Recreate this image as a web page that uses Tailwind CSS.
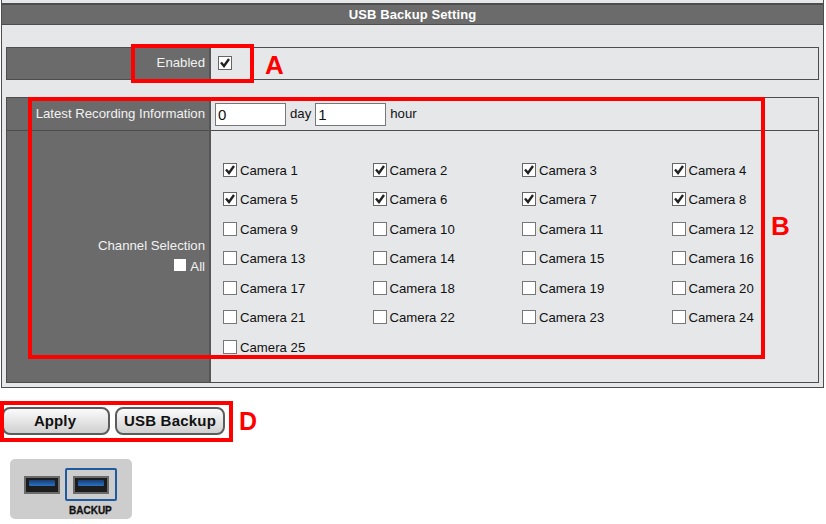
<!DOCTYPE html>
<html><head><script src="https://cdn.jsdelivr.net/npm/@tailwindcss/browser@4"></script></head>
<body class="bg-white font-['Liberation_Sans',Arial,sans-serif] text-[13.2px] text-[#111]">
<div class="relative w-[826px] h-[524px] overflow-hidden">
  <!-- Panel -->
  <div class="ml-[1px] w-[823px] h-[388px] border-x border-b border-[#4d4d4d] bg-[#e6e7e9] pt-[3px]">
    <div class="h-[22px] border-t-2 border-b border-t-[#4d4d4d] border-b-[#4d4d4d] bg-[#6b6b6b] text-center text-white font-bold text-[13px] leading-[19px] tracking-[0.1px]">USB Backup Setting</div>
    <div class="px-[4px] pt-[22px]">
      <div class="flex h-[33px] w-[813px] border border-[#4d4d4d]">
        <div class="w-[204px] shrink-0 flex items-center justify-end pr-[4px] pb-[2px] bg-[#6b6b6b] border-r-2 border-[#555] text-[#f2f2f2]">Enabled</div>
        <div class="flex items-center pl-[7px] pb-[2px]">
          <span class="flex items-center justify-center w-[14px] h-[14px] bg-white border border-[#666]"><svg viewBox="0 0 12 12" class="w-[12px] h-[12px]"><path d="M2 5.5L5 9L10 2" fill="none" stroke="#222" stroke-width="2.4"/></svg></span>
        </div>
      </div>
      <div class="mt-[17px] w-[813px] h-[286px] border border-[#4d4d4d] flex">
        <div class="w-[204px] shrink-0 bg-[#6b6b6b] border-r-2 border-[#555] flex flex-col text-[#f2f2f2]">
          <div class="h-[33px] flex items-center justify-end pr-[4px] border-b border-[#4d4d4d] pb-[1px]">Latest Recording Information</div>
          <div class="flex-1 flex flex-col items-end justify-center pr-[4px] pb-[2px] leading-[21px]">
            <div>Channel Selection</div>
            <div class="flex items-center gap-[4px]"><span class="w-[12px] h-[12px] bg-white -mt-[2px]"></span>All</div>
          </div>
        </div>
        <div class="flex-1 min-w-0 flex flex-col">
          <div class="h-[33px] flex items-center pl-[4px] gap-[4px] border-b border-[#4d4d4d]">
            <span class="w-[71px] h-[23px] bg-white border border-[#777] pl-[2px] text-[15px] leading-[21px]">0</span><span>day</span>
            <span class="w-[71px] h-[23px] bg-white border border-[#777] pl-[2px] text-[15px] leading-[21px]">1</span><span>hour</span>
          </div>
          <div class="grid grid-cols-[149.5px_149.5px_149.5px_1fr] auto-rows-[29.5px] pl-[12px] pt-[25px]">
            <label class="flex items-center gap-[3px]"><span class="flex items-center justify-center w-[14px] h-[14px] bg-white border border-[#666] -mt-[2px]"><svg viewBox="0 0 12 12" class="w-[12px] h-[12px]"><path d="M2 5.5L5 9L10 2" fill="none" stroke="#222" stroke-width="2.4"/></svg></span>Camera 1</label>
            <label class="flex items-center gap-[3px]"><span class="flex items-center justify-center w-[14px] h-[14px] bg-white border border-[#666] -mt-[2px]"><svg viewBox="0 0 12 12" class="w-[12px] h-[12px]"><path d="M2 5.5L5 9L10 2" fill="none" stroke="#222" stroke-width="2.4"/></svg></span>Camera 2</label>
            <label class="flex items-center gap-[3px]"><span class="flex items-center justify-center w-[14px] h-[14px] bg-white border border-[#666] -mt-[2px]"><svg viewBox="0 0 12 12" class="w-[12px] h-[12px]"><path d="M2 5.5L5 9L10 2" fill="none" stroke="#222" stroke-width="2.4"/></svg></span>Camera 3</label>
            <label class="flex items-center gap-[3px]"><span class="flex items-center justify-center w-[14px] h-[14px] bg-white border border-[#666] -mt-[2px]"><svg viewBox="0 0 12 12" class="w-[12px] h-[12px]"><path d="M2 5.5L5 9L10 2" fill="none" stroke="#222" stroke-width="2.4"/></svg></span>Camera 4</label>
            <label class="flex items-center gap-[3px]"><span class="flex items-center justify-center w-[14px] h-[14px] bg-white border border-[#666] -mt-[2px]"><svg viewBox="0 0 12 12" class="w-[12px] h-[12px]"><path d="M2 5.5L5 9L10 2" fill="none" stroke="#222" stroke-width="2.4"/></svg></span>Camera 5</label>
            <label class="flex items-center gap-[3px]"><span class="flex items-center justify-center w-[14px] h-[14px] bg-white border border-[#666] -mt-[2px]"><svg viewBox="0 0 12 12" class="w-[12px] h-[12px]"><path d="M2 5.5L5 9L10 2" fill="none" stroke="#222" stroke-width="2.4"/></svg></span>Camera 6</label>
            <label class="flex items-center gap-[3px]"><span class="flex items-center justify-center w-[14px] h-[14px] bg-white border border-[#666] -mt-[2px]"><svg viewBox="0 0 12 12" class="w-[12px] h-[12px]"><path d="M2 5.5L5 9L10 2" fill="none" stroke="#222" stroke-width="2.4"/></svg></span>Camera 7</label>
            <label class="flex items-center gap-[3px]"><span class="flex items-center justify-center w-[14px] h-[14px] bg-white border border-[#666] -mt-[2px]"><svg viewBox="0 0 12 12" class="w-[12px] h-[12px]"><path d="M2 5.5L5 9L10 2" fill="none" stroke="#222" stroke-width="2.4"/></svg></span>Camera 8</label>
            <label class="flex items-center gap-[3px]"><span class="w-[14px] h-[14px] bg-white border border-[#777] -mt-[2px]"></span>Camera 9</label>
            <label class="flex items-center gap-[3px]"><span class="w-[14px] h-[14px] bg-white border border-[#777] -mt-[2px]"></span>Camera 10</label>
            <label class="flex items-center gap-[3px]"><span class="w-[14px] h-[14px] bg-white border border-[#777] -mt-[2px]"></span>Camera 11</label>
            <label class="flex items-center gap-[3px]"><span class="w-[14px] h-[14px] bg-white border border-[#777] -mt-[2px]"></span>Camera 12</label>
            <label class="flex items-center gap-[3px]"><span class="w-[14px] h-[14px] bg-white border border-[#777] -mt-[2px]"></span>Camera 13</label>
            <label class="flex items-center gap-[3px]"><span class="w-[14px] h-[14px] bg-white border border-[#777] -mt-[2px]"></span>Camera 14</label>
            <label class="flex items-center gap-[3px]"><span class="w-[14px] h-[14px] bg-white border border-[#777] -mt-[2px]"></span>Camera 15</label>
            <label class="flex items-center gap-[3px]"><span class="w-[14px] h-[14px] bg-white border border-[#777] -mt-[2px]"></span>Camera 16</label>
            <label class="flex items-center gap-[3px]"><span class="w-[14px] h-[14px] bg-white border border-[#777] -mt-[2px]"></span>Camera 17</label>
            <label class="flex items-center gap-[3px]"><span class="w-[14px] h-[14px] bg-white border border-[#777] -mt-[2px]"></span>Camera 18</label>
            <label class="flex items-center gap-[3px]"><span class="w-[14px] h-[14px] bg-white border border-[#777] -mt-[2px]"></span>Camera 19</label>
            <label class="flex items-center gap-[3px]"><span class="w-[14px] h-[14px] bg-white border border-[#777] -mt-[2px]"></span>Camera 20</label>
            <label class="flex items-center gap-[3px]"><span class="w-[14px] h-[14px] bg-white border border-[#777] -mt-[2px]"></span>Camera 21</label>
            <label class="flex items-center gap-[3px]"><span class="w-[14px] h-[14px] bg-white border border-[#777] -mt-[2px]"></span>Camera 22</label>
            <label class="flex items-center gap-[3px]"><span class="w-[14px] h-[14px] bg-white border border-[#777] -mt-[2px]"></span>Camera 23</label>
            <label class="flex items-center gap-[3px]"><span class="w-[14px] h-[14px] bg-white border border-[#777] -mt-[2px]"></span>Camera 24</label>
            <label class="flex items-center gap-[3px]"><span class="w-[14px] h-[14px] bg-white border border-[#777] -mt-[2px]"></span>Camera 25</label>
          </div>
        </div>
      </div>
    </div>
  </div>
  <!-- Buttons -->
  <div class="flex gap-[5px] pl-[2px] pt-[19px]">
    <button class="w-[108px] h-[28px] rounded-[8px] border-2 border-[#5c5c5c] pr-[2px] bg-linear-to-b from-[#fbfbfb] to-[#d0d0d0] font-bold text-[15px] tracking-[0.1px] text-[#111]">Apply</button>
    <button class="w-[110px] h-[28px] rounded-[8px] border-2 border-[#5c5c5c] bg-linear-to-b from-[#fbfbfb] to-[#d0d0d0] font-bold text-[15px] tracking-[0.2px] text-[#111]">USB Backup</button>
  </div>
  <!-- USB graphic -->
  <div class="relative ml-[10px] mt-[24px] w-[122px] h-[60px] rounded-[5px] bg-[#cdcdcd]">
    <div class="absolute left-[14px] top-[17px] w-[36px] h-[18px] bg-[#1c1c1c] border-2 border-[#6b6b6b] px-[3px] pt-[2px]"><div class="h-[6px] rounded-[1px] bg-linear-to-b from-[#1a3f73] to-[#2a72c4]"></div></div>
    <div class="absolute left-[55px] top-[9px] w-[52px] h-[33px] border-2 border-[#1f5a9e] rounded-[2px] p-[6px]">
      <div class="h-[18px] bg-[#1c1c1c] border-2 border-[#6b6b6b] px-[3px] pt-[2px]"><div class="h-[6px] rounded-[1px] bg-linear-to-b from-[#1a3f73] to-[#2a72c4]"></div></div>
    </div>
    <div class="absolute left-[59px] top-[46px] text-[10px] leading-[12px] font-bold text-[#111] [-webkit-text-stroke:0.3px_#111]">BACKUP</div>
  </div>
  <!-- Red annotations -->
  <div class="absolute left-[131px] top-[44px] w-[123px] h-[39px] border-[4px] border-[#f00]"></div>
  <div class="absolute left-[265px] top-[50px] text-[#f00] font-bold text-[26px] leading-[30px]">A</div>
  <div class="absolute left-[28px] top-[97px] w-[737px] h-[262px] border-[4px] border-[#f00]"></div>
  <div class="absolute left-[771px] top-[211px] text-[#f00] font-bold text-[26px] leading-[30px]">B</div>
  <div class="absolute left-0 top-[401px] w-[233px] h-[41px] border-[4px] border-[#f00]"></div>
  <div class="absolute left-[239px] top-[406px] text-[#f00] font-bold text-[25px] leading-[30px]">D</div>
</div>
</body></html>
